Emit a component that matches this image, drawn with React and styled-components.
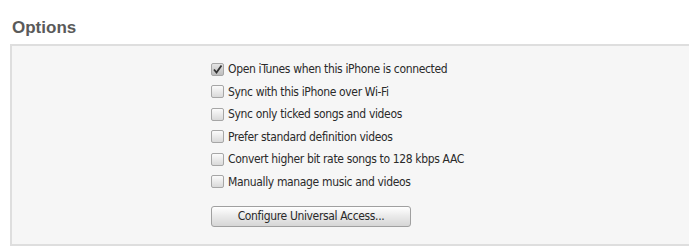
import React from "react";
import styled, { createGlobalStyle } from "styled-components";

const Global = createGlobalStyle`
  html, body { margin: 0; padding: 0; background: #ffffff; }
  body { width: 689px; height: 250px; overflow: hidden; }
`;

const Page = styled.div`
  padding: 19px 0 0 10px;
  font-family: "DejaVu Sans Condensed", "DejaVu Sans", sans-serif;
`;

const Title = styled.h2`
  margin: 0 0 8px 2px;
  font-family: "Liberation Sans", Arial, sans-serif;
  font-weight: bold;
  font-size: 17px;
  line-height: 17px;
  color: #5a5a5a;
`;

const Panel = styled.div`
  background: #f6f6f6;
  border: 2px solid #dedede;
  border-right: none;
  height: 202px;
  box-sizing: border-box;
  padding: 16px 0 0 199px;
`;

const List = styled.div`
  display: flex;
  flex-direction: column;
  gap: 8.6px;
`;

const Row = styled.label`
  display: flex;
  align-items: center;
  gap: 4px;
  height: 14px;
  font-size: 12px;
  letter-spacing: -0.35px;
  color: #2a2a2a;
`;

const Box = styled.span`
  width: 11px;
  height: 11px;
  border: 1px solid #a6a6a6;
  border-radius: 2px;
  background: ${(p) =>
    p.$checked ? "linear-gradient(#e4e4e4, #bdbdbd)" : "linear-gradient(#fbfbfb, #d9d9d9)"};
  display: flex;
  align-items: center;
  justify-content: center;
  flex: none;
`;

const Button = styled.button`
  margin-top: 17px;
  width: 200px;
  height: 21px;
  border: 1px solid #a0a0a0;
  border-radius: 3px;
  background: linear-gradient(#ffffff, #e9e9e9 50%, #d6d6d6);
  font-family: "DejaVu Sans Condensed", "DejaVu Sans", sans-serif;
  font-size: 12px;
  letter-spacing: -0.35px;
  color: #2a2a2a;
  padding: 0;
`;

const items = [
  ["Open iTunes when this iPhone is connected", true],
  ["Sync with this iPhone over Wi-Fi", false],
  ["Sync only ticked songs and videos", false],
  ["Prefer standard definition videos", false],
  ["Convert higher bit rate songs to 128 kbps AAC", false],
  ["Manually manage music and videos", false],
];

const Check = () => (
  <svg width="11" height="11" viewBox="0 0 11 11">
    <path d="M2 5.5 L4.5 8.5 L9.5 1.5" fill="none" stroke="#333" strokeWidth="1.8" />
  </svg>
);

export default function App() {
  return (
    <Page>
      <Global />
      <Title>Options</Title>
      <Panel>
        <List>
          {items.map(([t, c]) => (
            <Row key={t}>
              <Box $checked={c}>{c && <Check />}</Box>
              {t}
            </Row>
          ))}
        </List>
        <Button>Configure Universal Access...</Button>
      </Panel>
    </Page>
  );
}
